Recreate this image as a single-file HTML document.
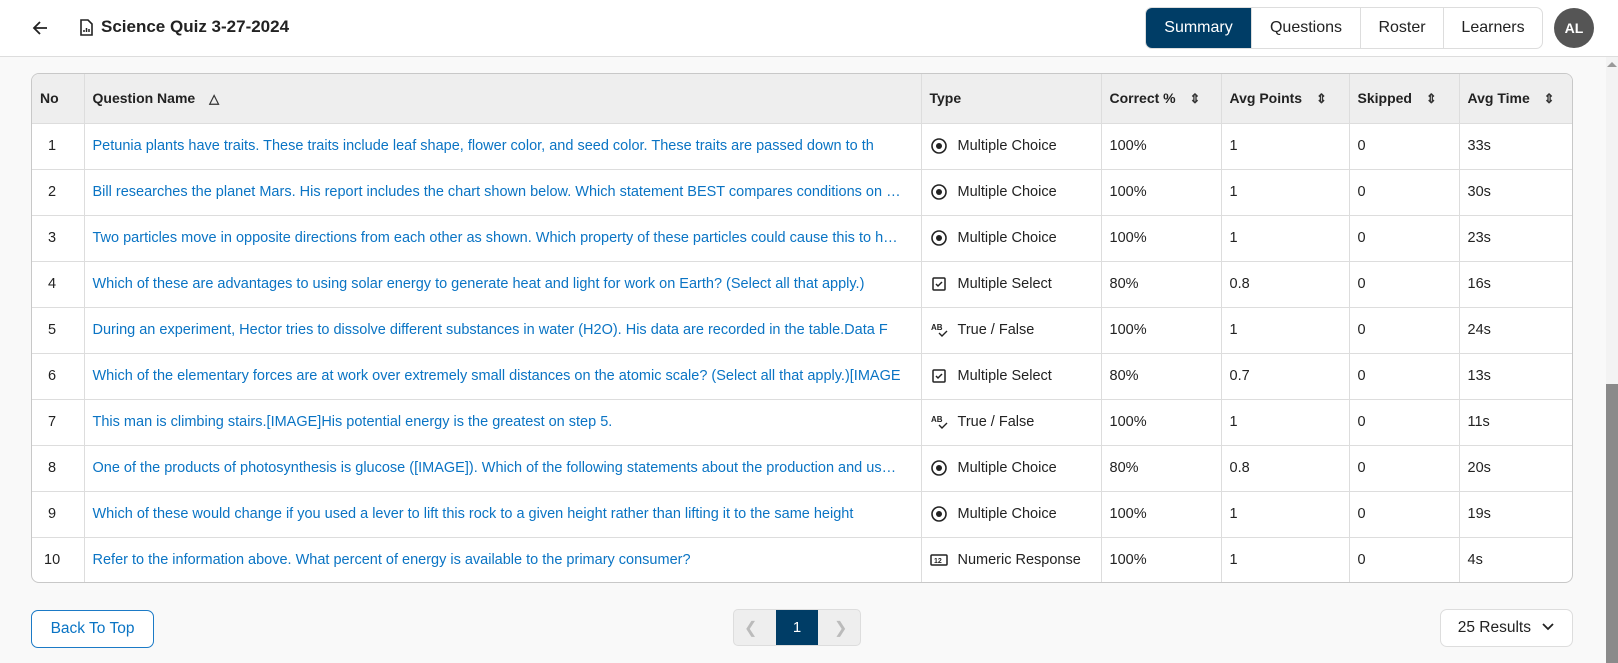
<!DOCTYPE html>
<html><head><meta charset="utf-8"><style>
*{box-sizing:border-box;margin:0;padding:0}
body{width:1618px;height:663px;overflow:hidden;background:#f9f9f9;font-family:"Liberation Sans",sans-serif;color:#222;position:relative}
.hdr{position:absolute;left:0;top:0;width:1618px;height:57px;background:#fff;border-bottom:1px solid #ddd}
.title{position:absolute;left:101px;top:17px;font-size:17px;font-weight:bold;color:#222}
.tabs{position:absolute;left:1145px;top:7px;height:42px;display:flex;border:1px solid #ddd;border-radius:7px;overflow:hidden;background:#fff}
.tabs div{height:40px;line-height:40px;font-size:16px;text-align:center;border-left:1px solid #ddd;color:#222}
.tabs div.on{background:#003d66;color:#fff;border-left:none}
.av{position:absolute;left:1554px;top:8px;width:40px;height:40px;border-radius:50%;background:#555;color:#fff;font-weight:bold;font-size:14px;text-align:center;line-height:40px}
.tbl{position:absolute;left:31px;top:73px;width:1542px;height:510px;border:1px solid #c8c8c8;border-radius:8px;background:#fff;overflow:hidden}
table{border-collapse:collapse;width:100%;font-size:14.5px}
th{background:#eee;height:49px;text-align:left;font-weight:bold;padding-left:8px;border-left:1px solid #ddd;font-size:14px}
td{height:46px;border-top:1px solid #ddd;border-left:1px solid #ddd;padding-left:8px;white-space:nowrap;overflow:hidden}
th:first-child,td:first-child{border-left:none;padding-left:8px}
td.q{color:#0a74c4;max-width:837px;text-overflow:ellipsis}
td.n{padding-left:16px}
.ic{display:inline-block;width:18px;vertical-align:middle;margin-right:10px}
.srt{font-size:13px;margin-left:10px;color:#333}
.btn{position:absolute;border:1px solid #ddd;border-radius:7px;background:#fff;font-size:15.5px;text-align:center}
.sb{position:absolute;left:1606px;top:384px;width:12px;height:279px;background:#8a8a8a}
</style></head><body>
<div class="hdr">
<svg style="position:absolute;left:32px;top:20px" width="16" height="16" viewBox="0 0 16 16"><path d="M15 8H2M8 2L2 8l6 6" stroke="#222" stroke-width="1.8" fill="none"/></svg>
<svg style="position:absolute;left:80px;top:19px" width="13" height="17" viewBox="0 0 13 17"><path d="M1 1h7l4 4v11H1z" stroke="#222" stroke-width="1.6" fill="none"/><path d="M4 13v-2M6.5 13v-4M9 13v-3" stroke="#222" stroke-width="1.5"/></svg>
<div class="title">Science Quiz 3-27-2024</div>
<div class="tabs"><div class="on" style="width:105px">Summary</div><div style="width:109px">Questions</div><div style="width:83px">Roster</div><div style="width:99px">Learners</div></div>
<div class="av">AL</div>
</div>
<div class="tbl"><table>
<tr><th style="width:52px">No</th><th style="width:837px">Question Name <span class="srt">&#9651;</span></th><th style="width:180px">Type</th><th style="width:120px">Correct % <span class="srt">&#8661;</span></th><th style="width:128px">Avg Points <span class="srt">&#8661;</span></th><th style="width:110px">Skipped <span class="srt">&#8661;</span></th><th>Avg Time <span class="srt">&#8661;</span></th></tr>
<tr><td class="n">1</td><td class="q">Petunia plants have traits. These traits include leaf shape, flower color, and seed color. These traits are passed down to th</td><td><svg class="ic" viewBox="0 0 18 18" height="18"><circle cx="9" cy="9" r="7" stroke="#222" stroke-width="1.6" fill="none"/><circle cx="9" cy="9" r="3" fill="#222"/></svg>Multiple Choice</td><td>100%</td><td>1</td><td>0</td><td>33s</td></tr>
<tr><td class="n">2</td><td class="q">Bill researches the planet Mars. His report includes the chart shown below. Which statement BEST compares conditions on …</td><td><svg class="ic" viewBox="0 0 18 18" height="18"><circle cx="9" cy="9" r="7" stroke="#222" stroke-width="1.6" fill="none"/><circle cx="9" cy="9" r="3" fill="#222"/></svg>Multiple Choice</td><td>100%</td><td>1</td><td>0</td><td>30s</td></tr>
<tr><td class="n">3</td><td class="q">Two particles move in opposite directions from each other as shown. Which property of these particles could cause this to h…</td><td><svg class="ic" viewBox="0 0 18 18" height="18"><circle cx="9" cy="9" r="7" stroke="#222" stroke-width="1.6" fill="none"/><circle cx="9" cy="9" r="3" fill="#222"/></svg>Multiple Choice</td><td>100%</td><td>1</td><td>0</td><td>23s</td></tr>
<tr><td class="n">4</td><td class="q">Which of these are advantages to using solar energy to generate heat and light for work on Earth? (Select all that apply.)</td><td><svg class="ic" viewBox="0 0 18 18" height="18"><rect x="3" y="3" width="12" height="12" rx="1" stroke="#222" stroke-width="1.5" fill="none"/><path d="M6 9l2 2 4-4" stroke="#222" stroke-width="1.5" fill="none"/></svg>Multiple Select</td><td>80%</td><td>0.8</td><td>0</td><td>16s</td></tr>
<tr><td class="n">5</td><td class="q">During an experiment, Hector tries to dissolve different substances in water (H2O). His data are recorded in the table.Data F</td><td><svg class="ic" viewBox="0 0 18 18" height="18"><text x="1" y="9" font-size="8" font-weight="bold" font-family="Liberation Sans" fill="#222">AB</text><path d="M9 12l3 3 5-5" stroke="#222" stroke-width="1.4" fill="none"/></svg>True / False</td><td>100%</td><td>1</td><td>0</td><td>24s</td></tr>
<tr><td class="n">6</td><td class="q">Which of the elementary forces are at work over extremely small distances on the atomic scale? (Select all that apply.)[IMAGE</td><td><svg class="ic" viewBox="0 0 18 18" height="18"><rect x="3" y="3" width="12" height="12" rx="1" stroke="#222" stroke-width="1.5" fill="none"/><path d="M6 9l2 2 4-4" stroke="#222" stroke-width="1.5" fill="none"/></svg>Multiple Select</td><td>80%</td><td>0.7</td><td>0</td><td>13s</td></tr>
<tr><td class="n">7</td><td class="q">This man is climbing stairs.[IMAGE]His potential energy is the greatest on step 5.</td><td><svg class="ic" viewBox="0 0 18 18" height="18"><text x="1" y="9" font-size="8" font-weight="bold" font-family="Liberation Sans" fill="#222">AB</text><path d="M9 12l3 3 5-5" stroke="#222" stroke-width="1.4" fill="none"/></svg>True / False</td><td>100%</td><td>1</td><td>0</td><td>11s</td></tr>
<tr><td class="n">8</td><td class="q">One of the products of photosynthesis is glucose ([IMAGE]). Which of the following statements about the production and us…</td><td><svg class="ic" viewBox="0 0 18 18" height="18"><circle cx="9" cy="9" r="7" stroke="#222" stroke-width="1.6" fill="none"/><circle cx="9" cy="9" r="3" fill="#222"/></svg>Multiple Choice</td><td>80%</td><td>0.8</td><td>0</td><td>20s</td></tr>
<tr><td class="n">9</td><td class="q">Which of these would change if you used a lever to lift this rock to a given height rather than lifting it to the same height</td><td><svg class="ic" viewBox="0 0 18 18" height="18"><circle cx="9" cy="9" r="7" stroke="#222" stroke-width="1.6" fill="none"/><circle cx="9" cy="9" r="3" fill="#222"/></svg>Multiple Choice</td><td>100%</td><td>1</td><td>0</td><td>19s</td></tr>
<tr><td class="n" style="padding-left:12px">10</td><td class="q">Refer to the information above. What percent of energy is available to the primary consumer?</td><td><svg class="ic" viewBox="0 0 18 18" height="18"><rect x="1" y="4" width="16" height="10" rx="1" stroke="#222" stroke-width="1.5" fill="none"/><text x="4" y="12" font-size="7" font-weight="bold" font-family="Liberation Sans" fill="#222">12</text></svg>Numeric Response</td><td>100%</td><td>1</td><td>0</td><td>4s</td></tr>
</table></div>
<div class="btn" style="left:31px;top:610px;width:123px;height:38px;line-height:36px;border-color:#1b7ac6;color:#0a74c4">Back To Top</div>
<div style="position:absolute;left:733px;top:609px;width:128px;height:37px;border:1px solid #ddd;border-radius:5px;background:#eee;overflow:hidden">
<span style="position:absolute;left:10px;top:8px;color:#bbb;font-size:16px">&#10094;</span>
<div style="position:absolute;left:42px;top:0;width:42px;height:37px;background:#003d66;color:#fff;text-align:center;line-height:36px;font-size:15px">1</div>
<span style="position:absolute;left:100px;top:8px;color:#bbb;font-size:16px">&#10095;</span></div>
<div class="btn" style="left:1440px;top:609px;width:133px;height:38px;line-height:36px;color:#222">25 Results <svg width="14" height="10" viewBox="0 0 14 10" style="margin-left:6px"><path d="M2 2l5 5 5-5" stroke="#222" stroke-width="1.8" fill="none"/></svg></div>
<div style="position:absolute;left:1606px;top:57px;width:12px;height:606px;background:#f3f3f3"></div>
<div style="position:absolute;left:1607px;top:62px;width:0;height:0;border-left:5px solid transparent;border-right:5px solid transparent;border-bottom:5px solid #999"></div>
<div class="sb"></div>
</body></html>
